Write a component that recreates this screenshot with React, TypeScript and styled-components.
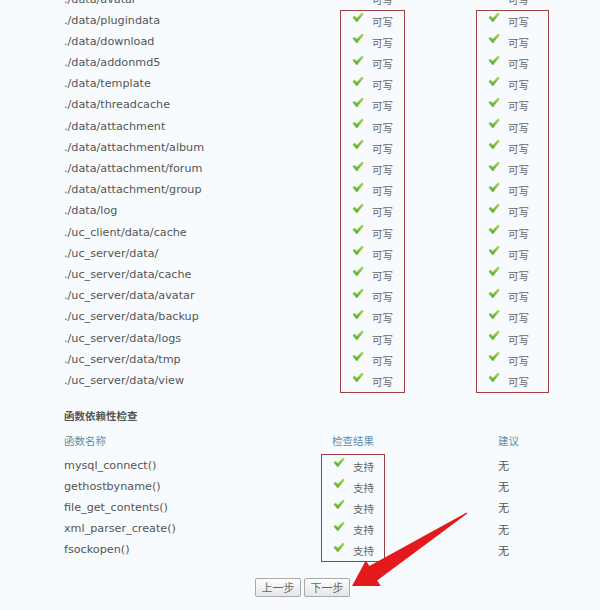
import React from "react";
import styled, { createGlobalStyle } from "styled-components";

const GlobalStyle = createGlobalStyle`
  html, body {
    margin: 0;
    padding: 0;
    background: #f8fbfd;
    overflow: hidden;
  }
  body {
    font-family: "DejaVu Sans", "Noto Sans CJK SC", sans-serif;
    font-size: 11.2px;
    color: #555;
  }
`;

const ROW = 21.2;

const Page = styled.div`
  position: relative;
  width: 600px;
  height: 610px;
  margin-top: -11.6px;
`;

// directory permission table
const DirTable = styled.div`
  display: grid;
  grid-template-columns: 276px 65px 71px 73px;
  padding-left: 64px;
`;

const Column = styled.div`
  display: flex;
  flex-direction: column;
`;

const Cell = styled.div<{ $indent?: number }>`
  height: ${ROW}px;
  padding-left: ${(p) => p.$indent ?? 0}px;
  display: flex;
  align-items: center;
  white-space: nowrap;
`;

const Boxed = styled.div`
  border: 1px solid #9c3f42;
  display: flex;
  flex-direction: column;
  padding-left: 11px;
`;

const Status = styled.span`
  display: flex;
  align-items: center;
  font-size: 10.5px;
  color: #666;
  & svg {
    margin-right: 8px;
    margin-top: -7px;
  }
`;

const Heading = styled.div`
  height: 21px;
  margin-top: 12px;
  padding-left: 64px;
  display: flex;
  align-items: center;
  font-weight: 600;
  color: #555;
  font-size: 10.5px;
`;

// function dependency table
const FuncTable = styled.div`
  display: grid;
  grid-template-columns: 257px 64px 113px 80px;
  padding-left: 64px;
  margin-top: 4px;
`;

const ColTitle = styled.div<{ $indent?: number }>`
  height: 21px;
  display: flex;
  align-items: center;
  color: #5b8fa8;
  font-size: 10.5px;
  padding-left: ${(p) => p.$indent ?? 0}px;
  margin-bottom: 3.5px;
  white-space: nowrap;
`;

const ButtonBar = styled.div`
  display: flex;
  gap: 3px;
  padding-left: 255px;
  margin-top: 16px;
`;

const Button = styled.button`
  width: 46px;
  height: 19px;
  padding: 0;
  border: 1px solid #a9a9a9;
  border-radius: 2px;
  background: linear-gradient(#fdfdfd, #e6e6e6);
  font-family: "Noto Sans CJK SC", sans-serif;
  font-size: 11px;
  color: #666;
  line-height: 17px;
`;

const Arrow = styled.svg`
  position: absolute;
  left: 0;
  top: 11.6px;
  pointer-events: none;
`;

const Check = () => (
  <svg width="12" height="11" viewBox="0 0 12 11">
    <defs>
      <linearGradient id="ck" x1="0" y1="0" x2="0" y2="1">
        <stop offset="0" stopColor="#a6e05a" />
        <stop offset="1" stopColor="#53a524" />
      </linearGradient>
    </defs>
    <path d="M0.5 5.6 L2.6 3.7 L4.8 5.9 L10 0.4 L11.8 2.1 L4.8 10.2 Z" fill="url(#ck)" />
  </svg>
);

const dirs = [
  "./data/avatar",
  "./data/plugindata",
  "./data/download",
  "./data/addonmd5",
  "./data/template",
  "./data/threadcache",
  "./data/attachment",
  "./data/attachment/album",
  "./data/attachment/forum",
  "./data/attachment/group",
  "./data/log",
  "./uc_client/data/cache",
  "./uc_server/data/",
  "./uc_server/data/cache",
  "./uc_server/data/avatar",
  "./uc_server/data/backup",
  "./uc_server/data/logs",
  "./uc_server/data/tmp",
  "./uc_server/data/view",
];

const funcs = [
  "mysql_connect()",
  "gethostbyname()",
  "file_get_contents()",
  "xml_parser_create()",
  "fsockopen()",
];

const Passed = ({ label, indent }: { label: string; indent?: number }) => (
  <Cell $indent={indent}>
    <Status>
      <Check />
      {label}
    </Status>
  </Cell>
);

// first directory row sits above the outlined block
const StatusColumn = () => (
  <Column>
    <Passed label="可写" indent={12} />
    <Boxed>
      {dirs.slice(1).map((d) => (
        <Passed key={d} label="可写" />
      ))}
    </Boxed>
  </Column>
);

export default function App() {
  return (
    <>
      <GlobalStyle />
      <Page>
        <DirTable>
          <Column>
            {dirs.map((d) => (
              <Cell key={d}>{d}</Cell>
            ))}
          </Column>
          <StatusColumn />
          <div />
          <StatusColumn />
        </DirTable>

        <Heading>函数依赖性检查</Heading>

        <FuncTable>
          <Column>
            <ColTitle>函数名称</ColTitle>
            {funcs.map((f) => (
              <Cell key={f}>{f}</Cell>
            ))}
          </Column>
          <Column>
            <ColTitle $indent={11}>检查结果</ColTitle>
            <Boxed>
              {funcs.map((f) => (
                <Passed key={f} label="支持" />
              ))}
            </Boxed>
          </Column>
          <div />
          <Column>
            <ColTitle>建议</ColTitle>
            {funcs.map((f) => (
              <Cell key={f}>无</Cell>
            ))}
          </Column>
        </FuncTable>

        <ButtonBar>
          <Button>上一步</Button>
          <Button>下一步</Button>
        </ButtonBar>

        <Arrow width="600" height="610" viewBox="0 0 600 610">
          <polygon
            points="467.3,513.4 377.1,580.6 380.8,586 352,586 365.8,560.6 369.4,565.9 466.7,512.6"
            fill="#e3191c"
          />
        </Arrow>
      </Page>
    </>
  );
}
